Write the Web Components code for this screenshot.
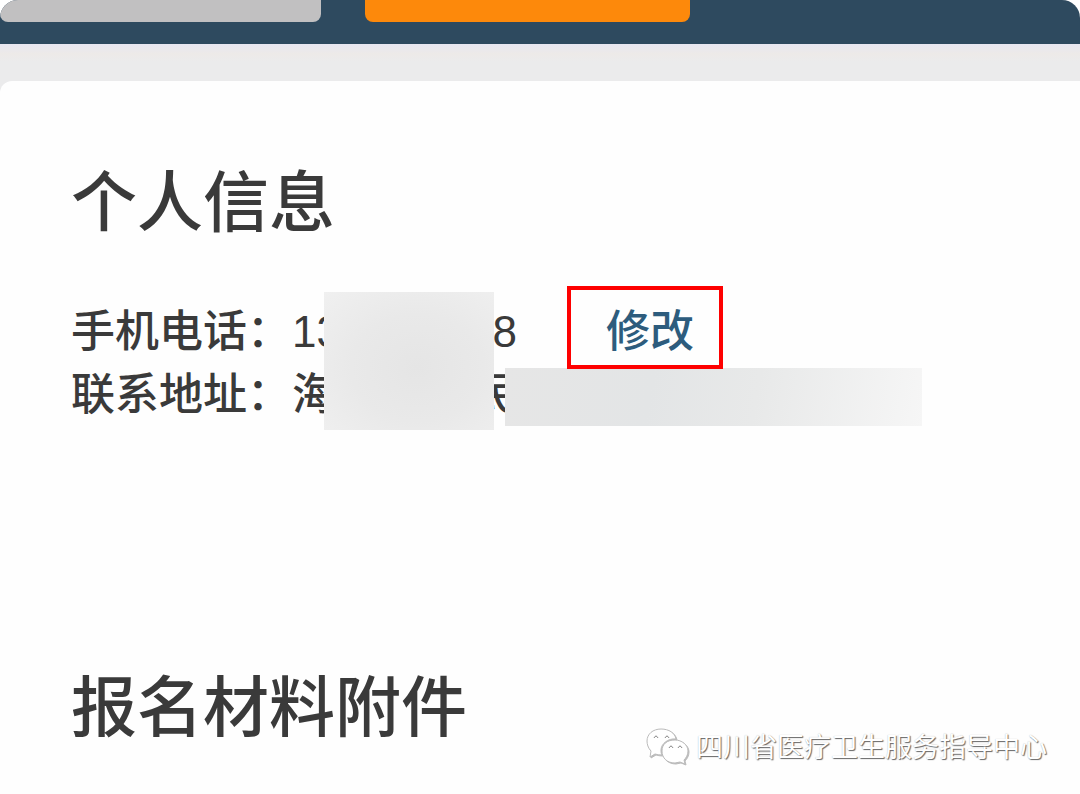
<!DOCTYPE html>
<html lang="zh-CN">
<head>
<meta charset="utf-8">
<meta name="viewport" content="width=device-width, initial-scale=1">
<title>个人信息</title>
<style>
html, body { margin: 0; min-height: 100%; background: #fff; }
body { font-family: "Liberation Sans", "Noto Sans CJK SC", sans-serif; color: #3a3a3a; }
</style>
</head>
<body>
<profile-page></profile-page>
<script>
function define(name, markup) {
  const template = document.createElement('template');
  template.innerHTML = markup;
  customElements.define(name, class extends HTMLElement {
    constructor() {
      super();
      this.attachShadow({ mode: 'open' }).append(template.content.cloneNode(true));
    }
  });
}

define('action-bar', `
<style>
:host { display: grid; grid-template-columns: 321fr 325fr 346fr; column-gap: 44px; height: 44px; background: #2e4a5f; border-radius: 18px 18px 0 0; overflow: hidden; }
button { height: 22px; border: 0; padding: 0; border-radius: 0 0 8px 8px; background: #c1c0c1; }
button.primary { background: #fd890b; }
</style>
<button type="button" aria-label="返回"></button>
<button type="button" class="primary" aria-label="提交"></button>`);

define('info-section', `
<style>
:host { display: block; }
h2 { margin: 0; font-size: 66px; line-height: 88px; font-weight: 500; font-family: "Noto Sans CJK SC", sans-serif; white-space: nowrap; }
.body { position: relative; margin-top: 59px; }
:host([heading-only]) .body { display: none; }
</style>
<h2><slot name="title"></slot></h2>
<div class="body"><slot></slot></div>`);

define('info-row', `
<style>
:host { display: flex; align-items: center; height: 63px; font-size: 44px; line-height: 63px; font-weight: 500; white-space: nowrap; }
.label { width: 221px; flex: none; }
</style>
<span class="label"><slot name="label"></slot></span><slot></slot>`);

define('masked-value', `
<style>
:host { display: flex; justify-content: space-between; flex: none; width: 225px; }
</style>
<slot name="start"></slot><slot name="end"></slot>`);

define('edit-link', `
<style>
:host { display: block; flex: none; align-self: flex-start; margin: -14px 0 0 50px; position: relative; z-index: 2; }
a { display: flex; box-sizing: border-box; width: 156px; height: 83px; padding: 8px 0 0 35px; border: 4px solid #fe0000; align-items: center; color: #2d5c7d; text-decoration: none; }
</style>
<a href="#edit"><slot></slot></a>`);

define('privacy-mask', `
<style>
:host { display: block; position: absolute; z-index: 1; }
:host([kind="tall"]) { left: 253px; top: -8px; width: 170px; height: 138px; background: radial-gradient(ellipse at 55% 55%, #e5e5e5, #e9e9e9 50%, #f0f0f0); }
:host([kind="wide"]) { left: 434px; top: 68px; width: 417px; height: 58px; background: linear-gradient(100deg, #e6e6e6, #e3e5e6 35%, #e8e9e9 60%, #f6f6f6); }
</style>`);

define('account-mark', `
<style>
:host { display: flex; align-items: center; gap: 7px; position: absolute; right: 33px; bottom: 28px; font: 27px/40px "Noto Sans CJK SC", sans-serif; color: #fff; text-shadow: 1px 1px 1px #666, 0 0 1px #bbb; white-space: nowrap; }
svg { display: block; width: 44px; height: 40px; filter: drop-shadow(1px 1px 0 #bbb); }
</style>
<svg viewBox="0 0 44 40" fill="#fff" stroke="#bbb" stroke-width="1" aria-hidden="true">
<path d="M17 29q-4 0-7-1l-5 3 1-6C3 22 2 18 2 15 2 8 8 3 16 3c8 0 14 4 15 10-8-1-15 5-15 11 0 2 0 3 1 5Z"/>
<path d="M30 14c7 0 13 5 13 11 0 4-2 7-4 9l1 4-5-2-5 1c-8 0-13-5-13-12s5-11 13-11Z"/>
<path fill="none" stroke="#888" d="M9 12q2-4 4 0M20 12q2-4 4 0M24 22q2-4 4 0M33 22q2-4 4 0"/>
</svg>
<span><slot></slot></span>`);

define('profile-page', `
<style>
:host { display: flex; flex-direction: column; position: relative; min-height: 100vh; background: #fefefe; overflow: hidden; }
action-bar { box-shadow: 0 -18px 0 18px #fff; }
.band { position: relative; background: linear-gradient(#e7e7f1, #edeae8 10px, #ebebec 18px, #ebebeb); padding-top: 37px; }
main { display: flex; flex-direction: column; gap: 232px; padding: 72px 71px 0; background: #fefefe; border-radius: 12px 0 0 0; }
</style>
<action-bar></action-bar>
<div class="band">
<main>
<info-section>
<span slot="title">个人信息</span>
<info-row><span slot="label">手机电话：</span><masked-value><span slot="start">13</span><span slot="end">8</span></masked-value><edit-link>修改</edit-link></info-row>
<info-row><span slot="label">联系地址：</span><masked-value><span slot="start">海</span><span slot="end">民</span></masked-value></info-row>
<privacy-mask kind="tall"></privacy-mask>
<privacy-mask kind="wide"></privacy-mask>
</info-section>
<info-section heading-only><span slot="title">报名材料附件</span></info-section>
</main>
</div>
<account-mark>四川省医疗卫生服务指导中心</account-mark>`);
</script>
</body>
</html>
